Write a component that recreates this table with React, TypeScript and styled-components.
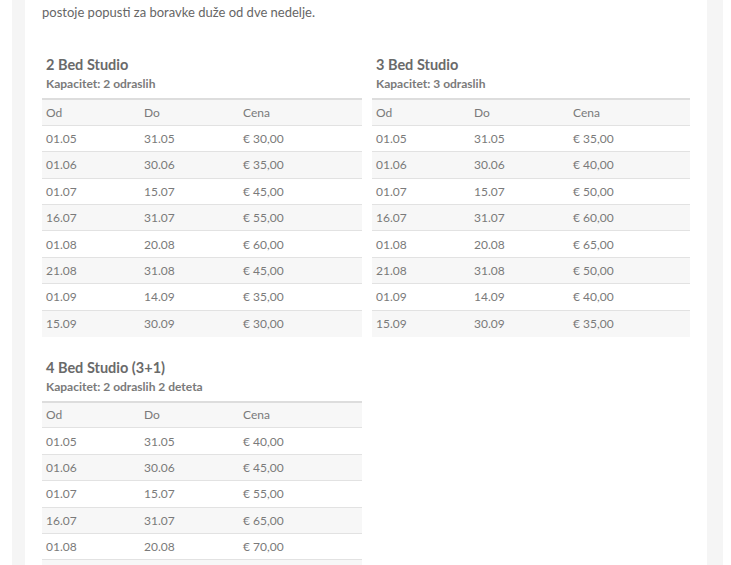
import styled, { createGlobalStyle } from 'styled-components'

const STUDIOS = [
  {
    title: `2 Bed Studio`,
    capacity: `Kapacitet: 2 odraslih`,
    rows: [
      [`01.05`, `31.05`, `€ 30,00`],
      [`01.06`, `30.06`, `€ 35,00`],
      [`01.07`, `15.07`, `€ 45,00`],
      [`16.07`, `31.07`, `€ 55,00`],
      [`01.08`, `20.08`, `€ 60,00`],
      [`21.08`, `31.08`, `€ 45,00`],
      [`01.09`, `14.09`, `€ 35,00`],
      [`15.09`, `30.09`, `€ 30,00`],
    ],
  },
  {
    title: `3 Bed Studio`,
    capacity: `Kapacitet: 3 odraslih`,
    rows: [
      [`01.05`, `31.05`, `€ 35,00`],
      [`01.06`, `30.06`, `€ 40,00`],
      [`01.07`, `15.07`, `€ 50,00`],
      [`16.07`, `31.07`, `€ 60,00`],
      [`01.08`, `20.08`, `€ 65,00`],
      [`21.08`, `31.08`, `€ 50,00`],
      [`01.09`, `14.09`, `€ 40,00`],
      [`15.09`, `30.09`, `€ 35,00`],
    ],
  },
  {
    title: `4 Bed Studio (3+1)`,
    capacity: `Kapacitet: 2 odraslih 2 deteta`,
    rows: [
      [`01.05`, `31.05`, `€ 40,00`],
      [`01.06`, `30.06`, `€ 45,00`],
      [`01.07`, `15.07`, `€ 55,00`],
      [`16.07`, `31.07`, `€ 65,00`],
      [`01.08`, `20.08`, `€ 70,00`],
      [`21.08`, `31.08`, `€ 55,00`],
      [`01.09`, `14.09`, `€ 45,00`],
      [`15.09`, `30.09`, `€ 40,00`],
    ],
  },
]

const GlobalStyle = createGlobalStyle`
  body {
    margin: 0;
    background: #fff;
    font-family: Lato, 'Open Sans', sans-serif;
    overflow: hidden;
  }
`

const Root = styled.div`
  height: 565px;
  padding-left: 12px;
  padding-right: 8px;
  overflow: hidden;
`

const Frame = styled.div`
  height: 100%;
  padding: 0 16px 0 13px;
  background: #f5f5f5;
`

const Content = styled.div`
  height: 100%;
  padding: 0 17px;
  background: #fff;
`

const Intro = styled.p`
  margin: 0;
  font-size: 13px;
  line-height: 24px;
  color: #666;
`

const Grid = styled.div`
  display: grid;
  grid-template-columns: 320px 318px;
  column-gap: 10px;
  row-gap: 21px;
  margin-top: 31px;
`

const Section = styled.section`
  display: flex;
  flex-direction: column;
`

const Title = styled.h3`
  margin: 0;
  padding-left: 4px;
  font-size: 14.5px;
  line-height: 20px;
  font-weight: 700;
  color: #6a6a6a;
`

const Capacity = styled.div`
  padding-left: 4px;
  font-size: 12px;
  line-height: 18px;
  font-weight: 700;
  color: #7a7a7a;
`

const Table = styled.table`
  width: 100%;
  margin-top: 5px;
  border-collapse: collapse;
  border-top: 2px solid #ddd;
  font-size: 12px;
  color: #7a7a7a;
`

const Row = styled.tr<{ $striped?: boolean }>`
  background: ${(p) => (p.$striped ? '#f7f7f7' : '#fff')};
`

const Cell = styled.td<{ $width?: number }>`
  box-sizing: border-box;
  width: ${(p) => (p.$width ? `${p.$width}px` : 'auto')};
  height: 26.4px;
  padding: 0 4px;
  border-top: 1px solid #e2e2e2;
  text-align: left;
  font-weight: 400;
  vertical-align: middle;
`

const HeadCell = styled(Cell).attrs({ as: 'th' })``

export default function App() {
  return (
    <Root>
      <GlobalStyle />
      <Frame>
        <Content>
          <Intro>postoje popusti za boravke duže od dve nedelje.</Intro>
          <Grid>
            {STUDIOS.map((studio) => (
              <Section key={studio.title}>
                <Title>{studio.title}</Title>
                <Capacity>{studio.capacity}</Capacity>
                <Table>
                  <thead>
                    <Row $striped>
                      <HeadCell $width={98}>Od</HeadCell>
                      <HeadCell $width={99}>Do</HeadCell>
                      <HeadCell>Cena</HeadCell>
                    </Row>
                  </thead>
                  <tbody>
                    {studio.rows.map((row, index) => (
                      <Row key={index} $striped={index % 2 === 1}>
                        {row.map((value, i) => (
                          <Cell key={i}>{value}</Cell>
                        ))}
                      </Row>
                    ))}
                  </tbody>
                </Table>
              </Section>
            ))}
          </Grid>
        </Content>
      </Frame>
    </Root>
  )
}
